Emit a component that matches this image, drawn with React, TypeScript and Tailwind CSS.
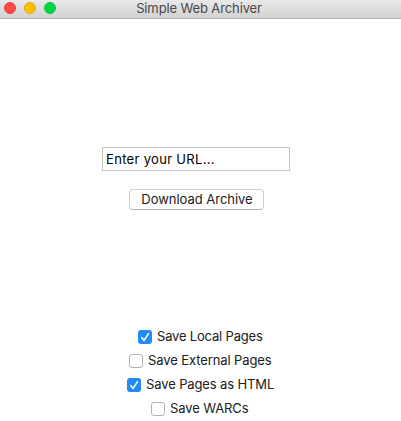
const options = [
  { label: 'Save Local Pages', checked: true, row: 'pl-[138px]', text: 'tracking-[-0.18px]' },
  { label: 'Save External Pages', checked: false, row: 'pl-[129px]', text: 'tracking-[-0.1px]' },
  { label: 'Save Pages as HTML', checked: true, row: 'pl-[127px]', text: 'tracking-[-0.12px]' },
  { label: 'Save WARCs', checked: false, row: 'pl-[151px]', text: 'tracking-[-0.1px]' },
];

function Checkbox({ checked }: { checked: boolean }) {
  return (
    <span
      className={
        checked
          ? 'flex size-[14px] shrink-0 rounded-[3px] bg-[#218cf8]'
          : 'flex size-[14px] shrink-0 rounded-[3px] border border-[#b5b5b5] bg-white'
      }
    >
      {checked && (
        <svg viewBox="0 0 14 14" className="size-[14px]" fill="none">
          <path d="M3.7 7.5 6.1 10.4 10.5 3.6" stroke="white" strokeWidth="1.5" strokeLinecap="round" strokeLinejoin="round" />
        </svg>
      )}
    </span>
  );
}

export default function App() {
  return (
    <div className="flex h-[421px] w-[401px] flex-col overflow-hidden bg-white font-['Inter',sans-serif] text-[13px] leading-4 text-[#202020]">
      <header className="grid h-[19px] shrink-0 grid-cols-[1fr_auto_1fr] border-b border-[#b0b0b0] bg-linear-to-b from-[#e9e9e9] to-[#d2d2d2]">
        <div className="flex gap-2 pt-[2px] pl-1">
          <span className="size-3 rounded-full border border-[#ee4043] bg-[#ff4848]" />
          <span className="size-3 rounded-full border border-[#e5a91a] bg-[#ffbf05]" />
          <span className="size-3 rounded-full border border-[#0fc23e] bg-[#00d742]" />
        </div>
        <h1 className="pr-[3px] tracking-[-0.12px] text-[#484848]">Simple Web Archiver</h1>
      </header>
      <input
        className="mt-32 ml-[102px] h-6 w-[188px] shrink-0 border border-[#c5c5c5] bg-white px-[3px] tracking-[0.32px] text-black outline-none"
        defaultValue="Enter your URL..."
      />
      <button className="mt-[18px] ml-[129px] h-[21px] w-[135px] shrink-0 rounded-[4px] border border-[#cfcfcf] border-b-[#b5b5b5] bg-white pb-[2px] pl-px tracking-[-0.03px] whitespace-nowrap">
        Download Archive
      </button>
      <div className="mt-[115px] flex flex-col">
        {options.map((o) => (
          <label key={o.label} className={`flex h-6 items-center gap-[5px] ${o.row}`}>
            <Checkbox checked={o.checked} />
            <span className={`pb-[2px] whitespace-nowrap ${o.text}`}>{o.label}</span>
          </label>
        ))}
      </div>
    </div>
  );
}
